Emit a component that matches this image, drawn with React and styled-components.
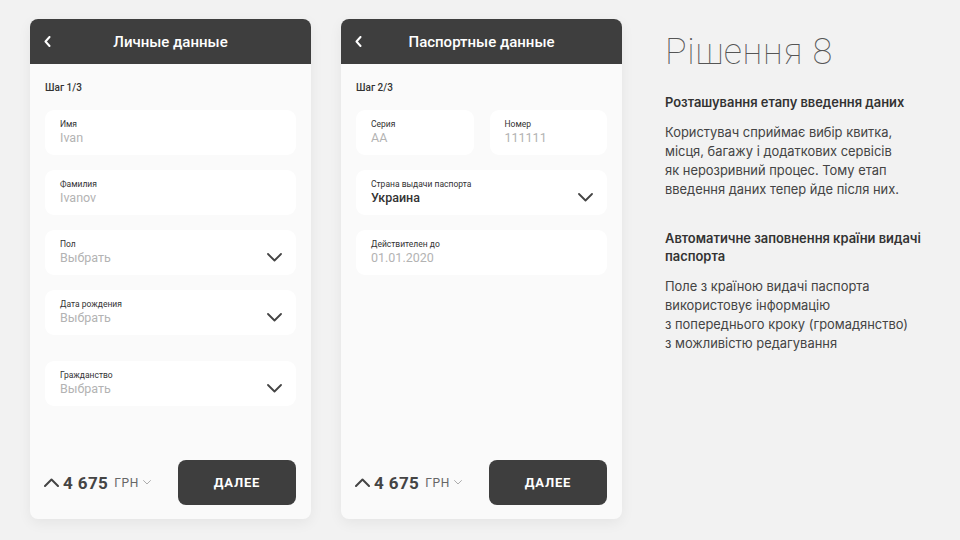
import React from "react";
import styled, { createGlobalStyle } from "styled-components";

const Global = createGlobalStyle`
  html, body { margin: 0; padding: 0; background: #f2f2f2; }
  body { font-family: Roboto, "Noto Sans", "Liberation Sans", sans-serif; -webkit-font-smoothing: antialiased; }
  * { box-sizing: border-box; }
`;

const Page = styled.div`
  width: 960px;
  height: 540px;
  display: flex;
  align-items: flex-start;
  padding: 19px 0 0 30px;
  gap: 30px;
  background: #f2f2f2;
`;

const Phone = styled.div`
  width: 281px;
  height: 500px;
  border-radius: 8px;
  background: #fafafa;
  box-shadow: 0 4px 14px rgba(0, 0, 0, 0.06);
  overflow: hidden;
  display: flex;
  flex-direction: column;
`;

const Header = styled.div`
  height: 45px;
  background: #3e3e3e;
  display: flex;
  align-items: center;
  position: relative;
  justify-content: center;
  color: #fff;
  font-size: 15px;
  font-weight: 500;
`;

const Back = styled.span`
  position: absolute;
  left: 14px;
  top: 17px;
  display: flex;
`;

const Body = styled.div`
  flex: 1;
  display: flex;
  flex-direction: column;
  padding: 0 15px 14px;
`;

const Step = styled.div`
  font-size: 10px;
  font-weight: 500;
  color: #333;
  margin: 18px 0 16px;
  line-height: 12px;
`;

const Fields = styled.div`
  display: flex;
  flex-direction: column;
  gap: 15px;
`;

const Row = styled.div`
  display: flex;
  gap: 16px;
  & > * { flex: 1; }
`;

const Field = styled.div`
  height: 45px;
  background: #fff;
  border-radius: 9px;
  padding: 8px 15px 0;
  display: flex;
  align-items: flex-start;
  justify-content: space-between;
  margin-top: ${(p) => (p.$extra ? "11px" : "0")};
`;

const FieldText = styled.div`
  display: flex;
  flex-direction: column;
`;

const Label = styled.div`
  font-size: 8.5px;
  color: #333;
  line-height: 10px;
  margin-top: 1px;
`;

const Value = styled.div`
  font-size: 12.5px;
  font-weight: ${(p) => (p.$filled ? 500 : 400)};
  color: ${(p) => (p.$filled ? "#333" : "#b3b3b3")};
  line-height: 15px;
  margin-top: 1px;
`;

const Chevron = styled.span`
  display: flex;
  margin-top: 15px;
  margin-right: -1px;
`;

const Footer = styled.div`
  margin-top: auto;
  display: flex;
  align-items: center;
  justify-content: space-between;
`;

const Price = styled.div`
  display: flex;
  align-items: center;
  color: #444;
  margin-left: -1px;
`;

const Amount = styled.span`
  font-size: 17px;
  font-weight: 700;
  margin-left: 4px;
  letter-spacing: 0.4px;
`;

const Currency = styled.span`
  font-size: 12px;
  color: #666;
  margin-left: 6px;
  letter-spacing: 0.6px;
`;

const SmallChevron = styled.span`
  margin-left: 4px;
  display: flex;
`;

const Button = styled.button`
  width: 118px;
  height: 45px;
  border: none;
  border-radius: 8px;
  background: #3e3e3e;
  color: #fff;
  font-family: inherit;
  font-size: 13px;
  font-weight: 700;
  letter-spacing: 0.8px;
`;

const Notes = styled.div`
  margin-left: 13px;
  padding-top: 13px;
  width: 290px;
  color: #444;
  font-family: Inter, Roboto, "Liberation Sans", sans-serif;
`;

const Title = styled.h1`
  margin: 0 0 22px;
  font-family: Roboto, "Liberation Sans", sans-serif;
  font-size: 36px;
  font-weight: 100;
  color: #555;
  line-height: 40px;
  letter-spacing: 0.6px;
`;

const Heading = styled.h3`
  margin: 0 0 ${(p) => (p.$mb ? p.$mb : "11px")};
  font-size: 12.9px;
  font-weight: 600;
  line-height: 18px;
  color: #333;
`;

const Para = styled.p`
  margin: 0 0 ${(p) => (p.$mb ? p.$mb : "0")};
  font-size: 12.9px;
  line-height: 19px;
  color: #444;
`;

const ChevronDown = ({ size = 15, stroke = 1.8, color = "#444" }) => (
  <svg width={size} height={size * 0.6} viewBox="0 0 15 9" fill="none">
    <path d="M1 1l6.5 6.5L14 1" stroke={color} strokeWidth={stroke} strokeLinecap="round" strokeLinejoin="round" />
  </svg>
);

const BackIcon = () => (
  <svg width="7" height="11" viewBox="0 0 7 11" fill="none">
    <path d="M5.5 1L1.5 5.5l4 4.5" stroke="#fff" strokeWidth="2" strokeLinecap="round" strokeLinejoin="round" />
  </svg>
);

const UpIcon = () => (
  <svg width="15" height="9" viewBox="0 0 15 9" fill="none">
    <path d="M1 8l6.5-6.5L14 8" stroke="#444" strokeWidth="2" strokeLinecap="round" strokeLinejoin="round" />
  </svg>
);

const InputField = ({ label, value, select, filled, extra }) => (
  <Field $extra={extra}>
    <FieldText>
      <Label>{label}</Label>
      <Value $filled={filled}>{value}</Value>
    </FieldText>
    {select && (
      <Chevron>
        <ChevronDown />
      </Chevron>
    )}
  </Field>
);

const Bottom = () => (
  <Footer>
    <Price>
      <UpIcon />
      <Amount>4 675</Amount>
      <Currency>ГРН</Currency>
      <SmallChevron>
        <ChevronDown size={8} stroke={1} color="#666" />
      </SmallChevron>
    </Price>
    <Button>ДАЛЕЕ</Button>
  </Footer>
);

const Screen = ({ title, step, children }) => (
  <Phone>
    <Header>
      <Back>
        <BackIcon />
      </Back>
      {title}
    </Header>
    <Body>
      <Step>{step}</Step>
      <Fields>{children}</Fields>
      <Bottom />
    </Body>
  </Phone>
);

export default function App() {
  return (
    <>
      <Global />
      <Page>
        <Screen title="Личные данные" step="Шаг 1/3">
          <InputField label="Имя" value="Ivan" />
          <InputField label="Фамилия" value="Ivanov" />
          <InputField label="Пол" value="Выбрать" select />
          <InputField label="Дата рождения" value="Выбрать" select />
          <InputField label="Гражданство" value="Выбрать" select extra />
        </Screen>
        <Screen title="Паспортные данные" step="Шаг 2/3">
          <Row>
            <InputField label="Серия" value="AA" />
            <InputField label="Номер" value="111111" />
          </Row>
          <InputField label="Страна выдачи паспорта" value="Украина" select filled />
          <InputField label="Действителен до" value="01.01.2020" />
        </Screen>
        <Notes>
          <Title>Рішення 8</Title>
          <Heading>Розташування етапу введення даних</Heading>
          <Para $mb="31px">
            Користувач сприймає вибір квитка,
            <br />
            місця, багажу і додаткових сервісів
            <br />
            як нерозривний процес. Тому етап
            <br />
            введення даних тепер йде після них.
          </Para>
          <Heading $mb="11px">
            Автоматичне заповнення країни видачі
            <br />
            паспорта
          </Heading>
          <Para>
            Поле з країною видачі паспорта
            <br />
            використовує інформацію
            <br />з попереднього кроку (громадянство)
            <br />з можливістю редагування
          </Para>
        </Notes>
      </Page>
    </>
  );
}
